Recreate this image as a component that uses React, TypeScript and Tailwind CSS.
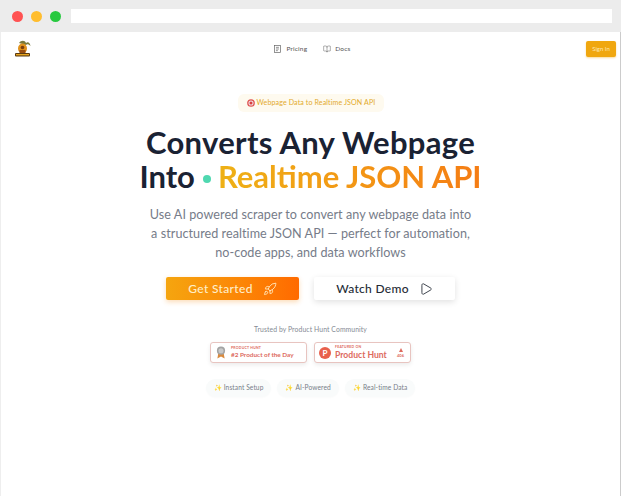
import { Rocket, Play, BookOpen } from "lucide-react";

const font = { fontFamily: "Lato, 'Noto Sans', sans-serif" };

function Logo() {
  return (
    <svg width="20" height="20" viewBox="0 0 20 20">
      <path d="M6 4 C8 1 12 1 13 4 C15 2 17 4 17.5 7 C15.5 5 14 5 13 6 Z" fill="#7a7a3a" />
      <ellipse cx="9.5" cy="9.5" rx="4.5" ry="5" fill="#e0921c" />
      <circle cx="9.5" cy="8.5" r="1.8" fill="#7a3d0c" />
      <rect x="6.5" y="11" width="6" height="3.5" fill="#9a4e10" />
      <rect x="2" y="14" width="15" height="3.5" rx="1" fill="#5a3a10" />
      <rect x="3" y="15" width="13" height="1.4" fill="#e8a520" />
    </svg>
  );
}

function TargetIcon() {
  return (
    <svg width="8" height="8" viewBox="0 0 10 10">
      <circle cx="5" cy="5" r="4.8" fill="#e0524f" />
      <circle cx="5" cy="5" r="3.2" fill="#f0dfe6" />
      <circle cx="5" cy="5" r="1.9" fill="#d8403f" />
    </svg>
  );
}

function PricingIcon() {
  return (
    <svg width="7" height="8" viewBox="0 0 8 9" fill="none" stroke="#666" strokeWidth="0.8">
      <rect x="0.6" y="0.6" width="6.8" height="7.8" />
      <path d="M2.2 2.6H5.6M2.2 4.5H5.6M2.2 6.4H4.4" />
    </svg>
  );
}

function Medal() {
  return (
    <svg width="10" height="13" viewBox="0 0 11 14">
      <path d="M2.5 8 L1.5 13.5 L5.5 11.5 L9.5 13.5 L8.5 8 Z" fill="#d9893c" />
      <circle cx="5.5" cy="5" r="4.5" fill="#a3a3a3" />
      <circle cx="5.5" cy="5" r="2.8" fill="#c9c9c9" />
    </svg>
  );
}

function Chip({ label }: { label: string }) {
  return (
    <span className="flex h-[18px] items-center gap-[2px] rounded-full bg-[#f9fbfb] px-[8px] text-[6.6px] tracking-[0.1px] text-[#777d88] shadow-[0_1px_2px_rgba(0,0,0,0.02)]">
      <span className="text-[6.5px] text-[#f2c94c]">✨</span>
      {label}
    </span>
  );
}

export default function App() {
  return (
    <div className="flex h-[496px] w-[621px] flex-col overflow-hidden bg-white" style={font}>
      <div className="flex h-[32px] shrink-0 items-center bg-[#ececec] pl-[12px] pr-[9px]">
        <div className="flex gap-[8px]">
          <span className="h-[11px] w-[11px] rounded-full bg-[#ff5252]" />
          <span className="h-[11px] w-[11px] rounded-full bg-[#ffbd2e]" />
          <span className="h-[11px] w-[11px] rounded-full bg-[#28c940]" />
        </div>
        <div className="ml-[10px] h-[14px] flex-1 bg-white" />
      </div>

      <div className="flex min-h-0 flex-1 flex-col border-l border-r border-l-[#eeeeee] border-r-[#cccccc] bg-white">
        <header className="flex h-[32px] shrink-0 items-center justify-between pl-[12px] pr-[4px] pt-[1px]">
          <Logo />
          <nav className="ml-[6px] flex items-center gap-[16px] text-[6.5px] tracking-[0.2px] text-[#555]">
            <span className="flex items-center gap-[5px]">
              <PricingIcon />
              Pricing
            </span>
            <span className="flex items-center gap-[4px]">
              <BookOpen size={8} strokeWidth={1.4} color="#555" />
              Docs
            </span>
          </nav>
          <span className="flex h-[16px] w-[30px] items-center justify-center rounded-[2px] bg-[#f0a70f] text-[6px] text-[#fde6b0] shadow-[0_1px_2px_rgba(240,167,15,0.4)]">
            Sign In
          </span>
        </header>

        <main className="flex flex-col items-center">
          <div className="mt-[30px] flex h-[18px] w-[146px] items-center gap-[2px] rounded-[6px] bg-[#fefaef] pl-[9px] text-[7.1px] tracking-[0.1px] whitespace-nowrap text-[#e3aa2c]">
            <TargetIcon />
            Webpage Data to Realtime JSON API
          </div>

          <h1 className="mt-[13px] text-center text-[31px] font-bold leading-[34px] tracking-[0.3px] text-[#1a2233]">
            Converts Any Webpage
            <br />
            <span className="inline-flex items-center">
              <span className="tracking-[0px]">Into</span>
              <span className="ml-[8px] mr-[7px] mt-[5px] h-[8px] w-[8px] rounded-full bg-[#4fd8b0]" />
              <span className="bg-gradient-to-r from-[#eeb116] to-[#f57c14] bg-clip-text tracking-[0px] text-transparent">
                Realtime JSON API
              </span>
            </span>
          </h1>

          <p className="mt-[12px] text-center text-[12.6px] leading-[19px] tracking-[0.05px] text-[#767c89]">
            Use AI powered scraper to convert any webpage data into
            <br />
            a structured realtime JSON API — perfect for automation,
            <br />
            no-code apps, and data workflows
          </p>

          <div className="mt-[15px] flex gap-[15px]">
            <div className="flex h-[23px] w-[133px] items-center justify-center gap-[10px] rounded-[2px] bg-gradient-to-r from-[#f5a50f] to-[#ff6a00] text-[12px] font-medium tracking-[0.35px] text-[#ffeec8] shadow-[0_2px_5px_rgba(245,140,20,0.3)]">
              Get Started
              <Rocket size={14} strokeWidth={1.5} color="#ffeec8" />
            </div>
            <div className="flex h-[23px] w-[141px] items-center justify-center gap-[10px] rounded-[2px] bg-white text-[12px] font-medium tracking-[0.3px] text-[#252b36] shadow-[0_2px_6px_rgba(0,0,0,0.12)]">
              Watch Demo
              <Play size={14} strokeWidth={1.5} color="#252b36" />
            </div>
          </div>

          <p className="mt-[24px] text-[6.8px] tracking-[0.1px] text-[#858a94]">Trusted by Product Hunt Community</p>

          <div className="mt-[8px] flex gap-[7px]">
            <div className="flex h-[21px] w-[97px] items-center gap-[5px] rounded-[3px] border border-[#e8c4c0] bg-white pl-[5px] shadow-[0_2px_4px_rgba(0,0,0,0.08)]">
              <Medal />
              <div className="flex flex-col leading-none text-[#dd6a5e]">
                <span className="text-[3.5px] font-bold tracking-[0.2px]">PRODUCT HUNT</span>
                <span className="mt-[2px] whitespace-nowrap text-[6.4px] font-bold">#2 Product of the Day</span>
              </div>
            </div>
            <div className="flex h-[21px] w-[97px] items-center rounded-[3px] border border-[#e8c4c0] bg-white pl-[4px] pr-[6px] shadow-[0_2px_4px_rgba(0,0,0,0.08)]">
              <span className="flex h-[12px] w-[12px] shrink-0 items-center justify-center rounded-full bg-[#e8604c] text-[8px] font-bold text-white">P</span>
              <div className="ml-[4px] flex flex-col leading-none text-[#dd6a5e]">
                <span className="text-[3.5px] font-bold tracking-[0.2px]">FEATURED ON</span>
                <span className="mt-[1px] whitespace-nowrap text-[8.6px] font-bold">Product Hunt</span>
              </div>
              <div className="ml-auto flex flex-col items-center leading-none text-[#dd6a5e]">
                <span className="h-0 w-0 border-x-[2.5px] border-b-[4px] border-x-transparent border-b-[#dd6a5e]" />
                <span className="mt-[2px] text-[4px] font-bold">406</span>
              </div>
            </div>
          </div>

          <div className="mt-[16px] flex gap-[6px]">
            <Chip label="Instant Setup" />
            <Chip label="AI-Powered" />
            <Chip label="Real-time Data" />
          </div>
        </main>
      </div>
    </div>
  );
}
